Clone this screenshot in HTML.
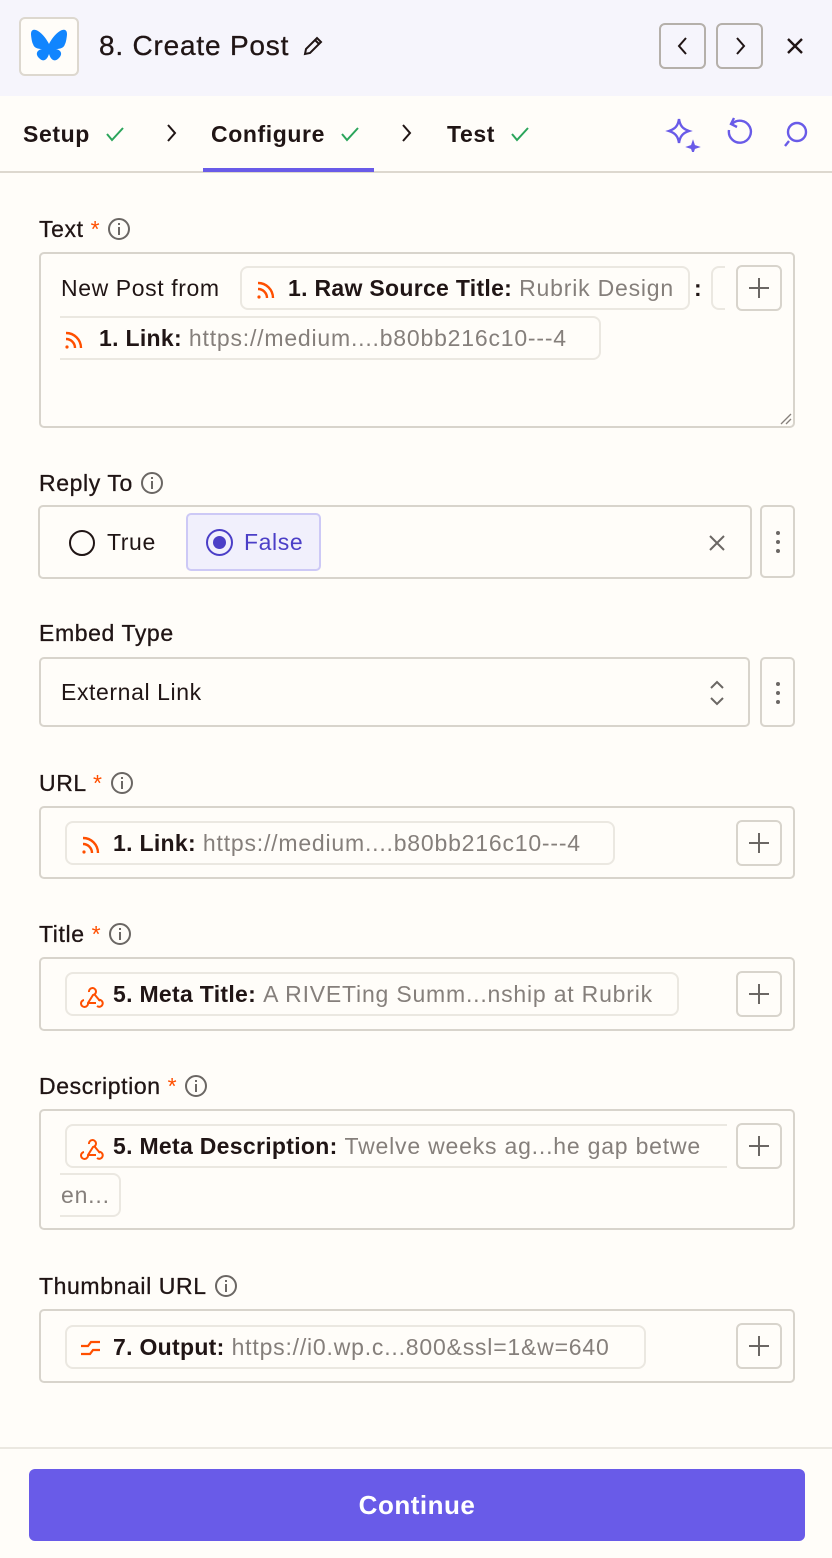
<!DOCTYPE html>
<html><head><meta charset="utf-8"><style>
*{box-sizing:border-box;margin:0;padding:0}
body{width:832px;height:1558px;background:#fffdf9;font-family:"Liberation Sans",sans-serif;color:#201515;position:relative;overflow:hidden;font-size:23px;letter-spacing:0.6px}
.a{position:absolute}
.hdr{left:0;top:0;width:832px;height:96px;background:#f6f5fc}
.box{position:absolute;border:2px solid #d8d4cc;border-radius:5px;background:#fffdf9}
.lbl{position:absolute;left:39px;font-size:23px;line-height:26px;white-space:nowrap;-webkit-text-stroke:0.3px #201515}
.star{color:#ff4f00;-webkit-text-stroke:0}
.info{display:inline-block;width:22px;height:22px;border:2px solid #6b6764;border-radius:50%;vertical-align:-3px;margin-left:8px;position:relative}
.info:before{content:"";position:absolute;left:8px;top:3px;width:2px;height:2px;background:#6b6764}
.info:after{content:"";position:absolute;left:8px;top:7px;width:2px;height:8px;background:#6b6764}
.chip{position:absolute;height:44px;border:2px solid #ebe8e1;border-radius:8px;background:#fffdf9;white-space:nowrap;overflow:hidden;font-size:23px;line-height:40px;padding-left:46px}
.chip b{color:#201515;letter-spacing:0.3px}
.chip span{color:#857f7b;letter-spacing:0.8px}
.chip svg{position:absolute;left:12px;top:10px}
.plus{position:absolute;width:46px;height:46px;border:2px solid #d8d4cc;border-radius:6px;background:#fffdf9}
.plus:before{content:"";position:absolute;left:11px;top:20px;width:20px;height:2px;background:#6b6764}
.plus:after{content:"";position:absolute;left:20px;top:11px;width:2px;height:20px;background:#6b6764}
.keb{position:absolute;width:35px;border:2px solid #d8d4cc;border-radius:5px}
.keb i{position:absolute;left:14px;width:4px;height:4px;border-radius:50%;background:#6b6764}
</style></head><body>
<div class="a hdr"></div>
<div class="a" style="left:19px;top:17px;width:60px;height:59px;border:2px solid #ddd8cf;border-radius:6px;background:#fffdf9"></div>
<svg class="a" style="left:29px;top:27px" width="40" height="40" viewBox="0 0 40 40"><path fill="#1185fe" d="M9 4c5 3 9 9 11 13 2-4 6-10 11-13 3-2 7-2 7 3 0 2-1 9-2 10-1 4-5 5-9 5 5 1 7 5 3 9-6 6-9-1-10-4-1 3-4 10-10 4-4-4-2-8 3-9-4 0-8-1-9-5-1-1-2-8-2-10 0-5 4-5 7-3z"/></svg>
<div class="a" style="left:99px;top:30px;font-size:28px;line-height:32px;color:#201515;letter-spacing:0.8px;-webkit-text-stroke:0.3px #201515">8. Create Post</div>
<svg class="a" style="left:301px;top:34px" width="24" height="24" viewBox="0 0 24 24" fill="none" stroke="#201515" stroke-width="2"><path d="M4 20l1-5L16 4l4 4L9 19z M14 6l4 4"/></svg>
<div class="a" style="left:659px;top:23px;width:47px;height:46px;border:2px solid #b5b0aa;border-radius:6px"></div>
<div class="a" style="left:716px;top:23px;width:47px;height:46px;border:2px solid #b5b0aa;border-radius:6px"></div>
<svg class="a" style="left:672px;top:35px" width="22" height="22" viewBox="0 0 22 22" fill="none" stroke="#201515" stroke-width="2"><path d="M14 3l-7 8 7 8"/></svg>
<svg class="a" style="left:729px;top:35px" width="22" height="22" viewBox="0 0 22 22" fill="none" stroke="#201515" stroke-width="2"><path d="M8 3l7 8-7 8"/></svg>
<svg class="a" style="left:785px;top:36px" width="20" height="20" viewBox="0 0 20 20" stroke="#201515" stroke-width="2.4"><path d="M3 3l14 14M17 3L3 17"/></svg>

<div class="a" style="left:0;top:171px;width:832px;height:2px;background:#ddd8cf"></div>
<div class="a" style="left:203px;top:168px;width:171px;height:4px;background:#695be8"></div>
<div class="a" style="left:23px;top:120px;font-size:23px;font-weight:bold;line-height:28px;letter-spacing:0.6px">Setup</div>
<div class="a" style="left:211px;top:120px;font-size:23px;font-weight:bold;line-height:28px;letter-spacing:0.6px">Configure</div>
<div class="a" style="left:447px;top:120px;font-size:23px;font-weight:bold;line-height:28px;letter-spacing:0.6px">Test</div>
<svg class="a" style="left:104px;top:124px" width="22" height="20" viewBox="0 0 22 20" fill="none" stroke="#2ba55b" stroke-width="2"><path d="M3 10l5 6L19 4"/></svg>
<svg class="a" style="left:339px;top:124px" width="22" height="20" viewBox="0 0 22 20" fill="none" stroke="#2ba55b" stroke-width="2"><path d="M3 10l5 6L19 4"/></svg>
<svg class="a" style="left:509px;top:124px" width="22" height="20" viewBox="0 0 22 20" fill="none" stroke="#2ba55b" stroke-width="2"><path d="M3 10l5 6L19 4"/></svg>
<svg class="a" style="left:163px;top:122px" width="16" height="22" viewBox="0 0 16 22" fill="none" stroke="#201515" stroke-width="2"><path d="M5 3l7 8-7 8"/></svg>
<svg class="a" style="left:398px;top:122px" width="16" height="22" viewBox="0 0 16 22" fill="none" stroke="#201515" stroke-width="2"><path d="M5 3l7 8-7 8"/></svg>
<svg class="a" style="left:664px;top:116px" width="38" height="36" viewBox="0 0 38 36" fill="none" stroke="#695be8" stroke-width="2.4"><path d="M15 3c1 7 4 10 10 12-6 2-9 5-10 12-1-7-4-10-10-12 6-2 9-5 10-12z"/><path d="M29 27l1 3 3 1-3 1-1 3-1-3-3-1 3-1z" fill="#695be8"/></svg>
<svg class="a" style="left:722px;top:116px" width="34" height="36" viewBox="0 0 34 36" fill="none" stroke="#695be8" stroke-width="2.4"><path d="M10 8a11 11 0 1 1-3 6"/><path d="M12 2l-3 6 6 3"/></svg>
<svg class="a" style="left:778px;top:116px" width="34" height="36" viewBox="0 0 34 36" fill="none" stroke="#695be8" stroke-width="2.4"><circle cx="19" cy="16" r="9"/><path d="M11 25l-4 5"/></svg>

<!-- Text -->
<div class="lbl" style="top:216px">Text <span class="star">*</span><span class="info"></span></div>
<div class="box" style="left:39px;top:252px;width:756px;height:176px"></div>
<div class="a" style="left:61px;top:275px;line-height:26px">New Post from</div>
<div class="chip" style="left:240px;top:266px;width:450px"><svg width="24" height="24" viewBox="0 0 24 24" fill="none" stroke="#ff4f00" stroke-width="2.4"><path d="M4 5a15 15 0 0 1 15 15M4 11a9 9 0 0 1 9 9"/><circle cx="5" cy="19" r="1.6" fill="#ff4f00" stroke="none"/></svg><b>1. Raw Source Title:</b> <span>Rubrik Design</span></div>
<div class="a" style="left:694px;top:275px;font-weight:bold">:</div>
<div class="a" style="left:711px;top:266px;width:14px;height:44px;border:2px solid #ebe8e1;border-right:none;border-radius:8px 0 0 8px"></div>
<div class="plus" style="left:736px;top:265px"></div>
<div class="chip" style="left:60px;top:316px;width:541px;padding-left:39px;border-left:none;border-radius:0 8px 8px 0"><svg style="left:2px" width="24" height="24" viewBox="0 0 24 24" fill="none" stroke="#ff4f00" stroke-width="2.4"><path d="M4 5a15 15 0 0 1 15 15M4 11a9 9 0 0 1 9 9"/><circle cx="5" cy="19" r="1.6" fill="#ff4f00" stroke="none"/></svg><b>1. Link:</b> <span>https://medium....b80bb216c10---4</span></div>
<svg class="a" style="left:777px;top:410px" width="16" height="16" viewBox="0 0 16 16" stroke="#857f7b" stroke-width="1.3"><path d="M14 4L4 14M14 9l-5 5"/></svg>

<!-- Reply To -->
<div class="lbl" style="top:470px">Reply To<span class="info"></span></div>
<div class="box" style="left:38px;top:505px;width:714px;height:74px"></div>
<div class="a" style="left:69px;top:530px;width:26px;height:26px;border:2.5px solid #201515;border-radius:50%"></div>
<div class="a" style="left:107px;top:529px;line-height:26px">True</div>
<div class="a" style="left:186px;top:513px;width:135px;height:58px;background:#f1f0fc;border:2px solid #cdc9f6;border-radius:5px"></div>
<div class="a" style="left:206px;top:529px;width:27px;height:27px;border:2.5px solid #4b3fc7;border-radius:50%"></div>
<div class="a" style="left:213px;top:536px;width:13px;height:13px;background:#4b3fc7;border-radius:50%"></div>
<div class="a" style="left:244px;top:529px;line-height:26px;color:#4b3fc7">False</div>
<svg class="a" style="left:707px;top:533px" width="20" height="20" viewBox="0 0 20 20" stroke="#6b6764" stroke-width="2"><path d="M3 3l14 14M17 3L3 17"/></svg>
<div class="keb" style="left:760px;top:505px;height:73px"><i style="top:24px"></i><i style="top:33px"></i><i style="top:42px"></i></div>

<!-- Embed Type -->
<div class="lbl" style="top:620px">Embed Type</div>
<div class="box" style="left:39px;top:657px;width:711px;height:70px"></div>
<div class="a" style="left:61px;top:679px;line-height:26px">External Link</div>
<svg class="a" style="left:706px;top:678px" width="22" height="30" viewBox="0 0 22 30" fill="none" stroke="#6b6764" stroke-width="2"><path d="M5 10l6-6 6 6M5 20l6 6 6-6"/></svg>
<div class="keb" style="left:760px;top:657px;height:70px"><i style="top:23px"></i><i style="top:32px"></i><i style="top:41px"></i></div>

<!-- URL -->
<div class="lbl" style="top:770px">URL <span class="star">*</span><span class="info"></span></div>
<div class="box" style="left:39px;top:806px;width:756px;height:73px"></div>
<div class="chip" style="left:65px;top:821px;width:550px"><svg width="24" height="24" viewBox="0 0 24 24" fill="none" stroke="#ff4f00" stroke-width="2.4"><path d="M4 5a15 15 0 0 1 15 15M4 11a9 9 0 0 1 9 9"/><circle cx="5" cy="19" r="1.6" fill="#ff4f00" stroke="none"/></svg><b>1. Link:</b> <span>https://medium....b80bb216c10---4</span></div>
<div class="plus" style="left:736px;top:820px"></div>

<!-- Title -->
<div class="lbl" style="top:921px">Title <span class="star">*</span><span class="info"></span></div>
<div class="box" style="left:39px;top:957px;width:756px;height:74px"></div>
<div class="chip" style="left:65px;top:972px;width:614px"><svg width="26" height="24" viewBox="0 0 26 24" fill="none" stroke="#ff4f00" stroke-width="2"><path d="M10 8a3.5 3.5 0 1 1 4 3l-5 8a3.5 3.5 0 1 1-4-3M17 19h-8M19 16a3.5 3.5 0 1 1-1 6M16 11l5 6"/></svg><b>5. Meta Title:</b> <span>A RIVETing Summ...nship at Rubrik</span></div>
<div class="plus" style="left:736px;top:971px"></div>

<!-- Description -->
<div class="lbl" style="top:1073px">Description <span class="star">*</span><span class="info"></span></div>
<div class="box" style="left:39px;top:1109px;width:756px;height:121px"></div>
<div class="chip" style="left:65px;top:1124px;width:662px;border-right:none;border-radius:8px 0 0 8px"><svg width="26" height="24" viewBox="0 0 26 24" fill="none" stroke="#ff4f00" stroke-width="2"><path d="M10 8a3.5 3.5 0 1 1 4 3l-5 8a3.5 3.5 0 1 1-4-3M17 19h-8M19 16a3.5 3.5 0 1 1-1 6M16 11l5 6"/></svg><b>5. Meta Description:</b> <span>Twelve weeks ag...he gap betwe</span></div>
<div class="plus" style="left:736px;top:1123px"></div>
<div class="chip" style="left:60px;top:1173px;width:61px;padding-left:1px;border-left:none;border-radius:0 8px 8px 0"><span>en...</span></div>

<!-- Thumbnail -->
<div class="lbl" style="top:1273px">Thumbnail URL<span class="info"></span></div>
<div class="box" style="left:39px;top:1309px;width:756px;height:74px"></div>
<div class="chip" style="left:65px;top:1325px;width:581px"><svg width="24" height="24" viewBox="0 0 24 24" fill="none" stroke="#ff4f00" stroke-width="2.2"><path d="M2 9h7l3-4h9M2 17h9l3-4h7"/></svg><b>7. Output:</b> <span>https://i0.wp.c...800&amp;ssl=1&amp;w=640</span></div>
<div class="plus" style="left:736px;top:1323px"></div>

<div class="a" style="left:0;top:1447px;width:832px;height:2px;background:#ebe8e1"></div>
<div class="a" style="left:29px;top:1469px;width:776px;height:72px;background:#695be8;border-radius:6px;color:#fff;font-weight:bold;font-size:26px;line-height:72px;text-align:center;letter-spacing:0.5px">Continue</div>
</body></html>
